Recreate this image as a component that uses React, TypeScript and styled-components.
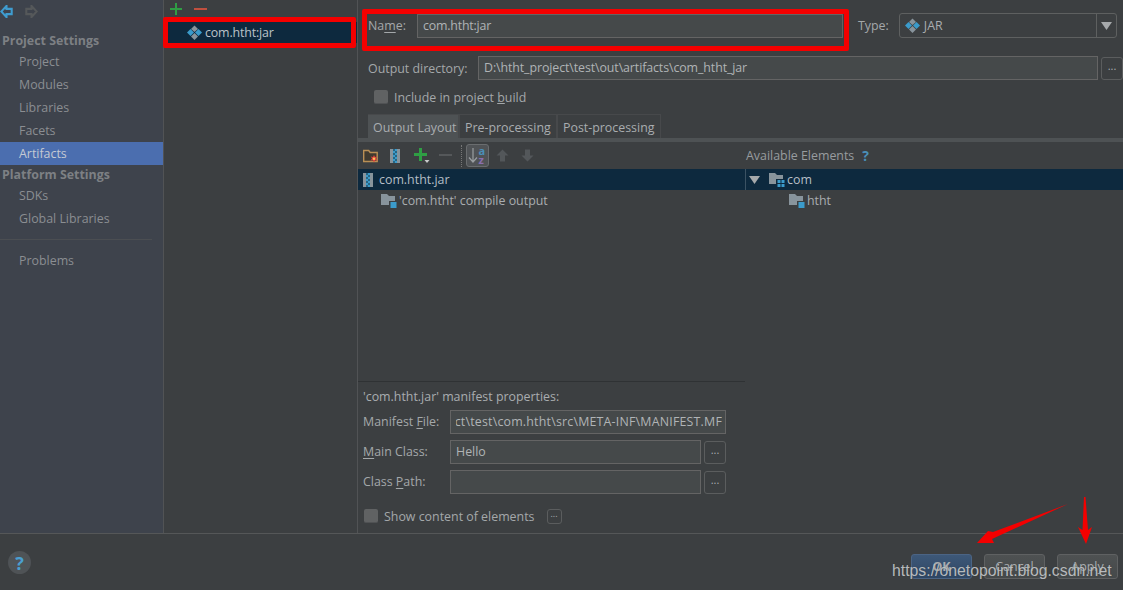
import React from "react";
import styled, { createGlobalStyle } from "styled-components";

const Global = createGlobalStyle`
  html, body { margin: 0; padding: 0; background: #3c3f41; }
  * { box-sizing: border-box; }
  body { font-family: "Open Sans", "Noto Sans", sans-serif; font-size: 12.4px; color: #bbbbbb; }
`;

const Page = styled.div`
  position: relative;
  width: 1123px;
  height: 590px;
  overflow: hidden;
  background: #3c3f41;
  display: flex;
  flex-direction: column;
`;
const Body = styled.div`
  height: 534px;
  flex: none;
  display: flex;
  border-bottom: 1px solid #555758;
`;
const Sidebar = styled.nav`
  width: 164px;
  flex: none;
  background: #3e434c;
  border-right: 1px solid #515355;
  display: flex;
  flex-direction: column;
`;
const NavArrows = styled.div`
  height: 31px;
  flex: none;
  padding-top: 5px;
  display: flex;
  gap: 12px;
  align-items: flex-start;
`;
const SectionTitle = styled.div`
  height: 19px;
  flex: none;
  line-height: 20px;
  padding-left: 2px;
  font-weight: 700;
  color: #7d8084;
`;
const NavItem = styled.div<{ $active?: boolean }>`
  height: 23px;
  flex: none;
  line-height: 23px;
  padding-left: 19px;
  color: ${(p) => (p.$active ? "#c5cad3" : "#8b8e92")};
  background: ${(p) => (p.$active ? "#4b6eaf" : "transparent")};
`;
const NavRule = styled.hr`
  margin: 9px 11px 9px 0;
  border: 0;
  border-top: 1px solid #4b4e52;
`;
const ListPane = styled.section`
  width: 194px;
  flex: none;
  border-right: 1px solid #515355;
  display: flex;
  flex-direction: column;
`;
const ListTools = styled.div`
  height: 22px;
  flex: none;
  padding: 3px 0 0 6px;
  display: flex;
  gap: 12px;
  align-items: flex-start;
`;
const SelectedRow = styled.div<{ $indent?: number }>`
  height: 21px;
  display: flex;
  align-items: center;
  gap: 3px;
  padding-left: ${(p) => p.$indent ?? 0}px;
  background: #0d293e;
  color: #bcc3c9;
  letter-spacing: -0.15px;
`;
const Detail = styled.section`
  flex: 1;
  min-width: 0;
  display: flex;
  flex-direction: column;
`;
const NameRow = styled.div`
  height: 25px;
  flex: none;
  margin-top: 13px;
  display: flex;
  align-items: center;
`;
const Label = styled.label<{ $width?: number; $inset?: number; $gap?: number }>`
  flex: none;
  width: ${(p) => (p.$width ? `${p.$width}px` : "auto")};
  padding-left: ${(p) => p.$inset ?? 0}px;
  margin-left: ${(p) => p.$gap ?? 0}px;
  color: #a4a8aa;
  u { text-underline-offset: 2px; }
`;
const Field = styled.div<{ $width?: number; $tracking?: number }>`
  height: 24px;
  line-height: 22px;
  width: ${(p) => p.$width}px;
  flex: none;
  padding: 0 5px;
  background: #45494a;
  border: 1px solid #646464;
  color: #b0b4b6;
  white-space: nowrap;
  overflow: hidden;
  letter-spacing: ${(p) => p.$tracking ?? 0}px;
`;
const ClippedEnd = styled.div`
  display: flex;
  justify-content: flex-end;
  overflow: hidden;
  margin-right: -2px;
  letter-spacing: 0.2px;
`;
const Combo = styled.div`
  margin-left: 10px;
  width: 218px;
  height: 25px;
  border: 1px solid #5e6060;
  border-radius: 3px;
  display: flex;
  align-items: center;
  flex: none;
  color: #a9adb0;
`;
const ComboValue = styled.div`
  flex: 1;
  display: flex;
  align-items: center;
  gap: 4px;
  padding-left: 5px;
`;
const ComboArrow = styled.div`
  width: 20px;
  height: 100%;
  border-left: 1px solid #5e6060;
  display: flex;
  align-items: center;
  justify-content: center;
`;
const OutputRow = styled.div`
  height: 24px;
  flex: none;
  margin-top: 18px;
  display: flex;
  align-items: center;
  gap: 3px;
`;
const Ellipsis = styled.div<{ $small?: boolean }>`
  flex: none;
  width: ${(p) => (p.$small ? 15 : 22)}px;
  height: ${(p) => (p.$small ? 15 : 23)}px;
  margin-left: ${(p) => (p.$small ? 6 : 0)}px;
  border: 1px solid #5b5d5e;
  border-radius: 3px;
  display: flex;
  align-items: center;
  justify-content: center;
  padding-bottom: 5px;
  font-size: ${(p) => (p.$small ? 9 : 11)}px;
  color: #a9adb0;
`;
const CheckRow = styled.div<{ $left: number; $top: number }>`
  display: flex;
  flex: none;
  align-items: center;
  gap: 6px;
  height: 18px;
  margin: ${(p) => p.$top}px 0 0 ${(p) => p.$left}px;
  color: #a4a8aa;
`;
const Check = styled.span`
  width: 14px;
  height: 14px;
  flex: none;
  border-radius: 2px;
  background: #606263;
  border-bottom: 1px solid #505254;
`;
const Tabs = styled.div`
  height: 24px;
  flex: none;
  margin: 8px 0 0 10px;
  display: flex;
`;
const Tab = styled.div<{ $active?: boolean; $width: number }>`
  width: ${(p) => p.$width}px;
  border: 1px solid #47494b;
  border-bottom: 0;
  border-left-width: ${(p) => (p.$active ? 0 : 1)}px;
  line-height: 26px;
  padding-left: 5px;
  white-space: nowrap;
  background: ${(p) => (p.$active ? "#4e5254" : "transparent")};
  color: #a9adb0;
`;
const ThickRule = styled.div`
  height: 4px;
  flex: none;
  background: #4e5254;
`;
const Split = styled.div`
  flex: 1;
  display: flex;
  min-height: 0;
`;
const LayoutCol = styled.div`
  width: 387px;
  flex: none;
  display: flex;
  flex-direction: column;
`;
const Toolbar = styled.div`
  height: 27px;
  flex: none;
  padding-left: 5px;
  display: flex;
  align-items: center;
`;
const ToolSlot = styled.span<{ $width: number }>`
  width: ${(p) => p.$width}px;
  flex: none;
  display: flex;
  align-items: center;
`;
const ToolDots = styled.span`
  width: 0;
  height: 22px;
  border-left: 1px dotted #777;
  margin-right: 4px;
`;
const SortButton = styled.span`
  width: 23px;
  height: 23px;
  flex: none;
  margin-right: 7px;
  border: 1px solid #6a6d6f;
  border-radius: 3px;
  background: #505356;
  display: flex;
  align-items: center;
  justify-content: center;
`;
const TreeRow = styled.div<{ $indent: number; $selected?: boolean; $gap?: number }>`
  height: 21px;
  flex: none;
  display: flex;
  align-items: center;
  gap: ${(p) => p.$gap ?? 2}px;
  padding-left: ${(p) => p.$indent}px;
  background: ${(p) => (p.$selected ? "#0d293e" : "transparent")};
  color: ${(p) => (p.$selected ? "#b6bfc6" : "#a9adb0")};
`;
const Spacer = styled.div`
  flex: 1;
`;
const Manifest = styled.div`
  height: 152px;
  flex: none;
  border-top: 1px solid #2f3234;
  padding: 6px 0 0 5px;
  display: flex;
  flex-direction: column;
`;
const ManifestTitle = styled.div`
  height: 17px;
  line-height: 17px;
  color: #a9adb0;
  margin-bottom: 5px;
`;
const ManifestRow = styled.div`
  height: 24px;
  flex: none;
  margin-bottom: 6px;
  display: flex;
  align-items: center;
  gap: 3px;
  label { padding-bottom: 2px; }
`;
const AvailableCol = styled.div`
  flex: 1;
  display: flex;
  flex-direction: column;
`;
const AvailableHead = styled.div`
  height: 27px;
  flex: none;
  display: flex;
  align-items: center;
  gap: 8px;
  padding-left: 1px;
  color: #989c9f;
`;
const QuestionMark = styled.span`
  font-weight: 700;
  font-size: 14px;
  color: #4a8fb8;
`;
const ExpandCell = styled.span`
  width: 22px;
  height: 100%;
  flex: none;
  border-left: 1px solid #3b5263;
  display: flex;
  align-items: center;
  padding-left: 3px;
`;
const Footer = styled.footer`
  flex: 1;
  display: flex;
  align-items: flex-start;
  padding: 20px 5px 0 8px;
`;
const Help = styled.div`
  width: 23px;
  height: 23px;
  margin-top: -3px;
  border-radius: 50%;
  background: #4f5356;
  display: flex;
  align-items: center;
  justify-content: center;
  font-size: 18px;
  font-weight: 700;
  color: #4a9fd0;
`;
const FooterButtons = styled.div`
  margin-left: auto;
  display: flex;
  gap: 12px;
`;
const DialogButton = styled.button<{ $primary?: boolean }>`
  width: 61px;
  height: 25px;
  padding: 0;
  border: 1px solid ${(p) => (p.$primary ? "#4b6484" : "#5f6162")};
  border-radius: 3px;
  font: inherit;
  font-weight: ${(p) => (p.$primary ? 700 : 400)};
  color: #a9adb0;
  background: ${(p) => (p.$primary ? "linear-gradient(#3d5878, #2f4765)" : "linear-gradient(#4e5152, #45494a)")};
`;
const RedBox = styled.div<{ $x: number; $y: number; $w: number; $h: number }>`
  position: absolute;
  left: ${(p) => p.$x}px;
  top: ${(p) => p.$y}px;
  width: ${(p) => p.$w}px;
  height: ${(p) => p.$h}px;
  border: 5px solid #f40000;
  border-radius: 2px;
`;
const ArrowLayer = styled.svg`
  position: absolute;
  left: 0;
  top: 0;
  width: 1123px;
  height: 590px;
  pointer-events: none;
`;
const Watermark = styled.div`
  position: absolute;
  left: 892px;
  top: 560px;
  font-family: "Liberation Sans", Arial, sans-serif;
  font-size: 15.8px;
  line-height: 22px;
  white-space: nowrap;
  color: rgba(205, 208, 210, 0.85);
  text-shadow: 0 0 1px rgba(60, 63, 65, 0.6);
`;

const Diamonds = () => (
  <svg width="15" height="15" viewBox="0 0 15 15">
    <path d="M7.5 0.5 11 4 7.5 7 4 4Z" fill="#88949c" />
    <path d="M3.5 4 7 7.5 3.5 11 0 7.5Z" fill="#3b9bcb" />
    <path d="M11.5 4 15 7.5 11.5 11 8 7.5Z" fill="#3b9bcb" />
    <path d="M7.5 8 11 11.5 7.5 15 4 11.5Z" fill="#88949c" />
  </svg>
);
const SmallPlus = () => (
  <svg width="12" height="12" viewBox="0 0 12 12">
    <path d="M5 0h2v5h5v2H7v5H5V7H0V5h5z" fill="#2f9e44" />
  </svg>
);
const DropPlus = () => (
  <svg width="16" height="16" viewBox="0 0 16 16">
    <path d="M5 0h3v5h5v3H8v5H5V8H0V5h5z" fill="#2f9e44" />
    <path d="M10.5 12h5L13 15z" fill="#c8cacb" />
  </svg>
);
const Minus = ({ c }: { c: string }) => (
  <svg width="13" height="13" viewBox="0 0 13 13">
    <rect x="0" y="5" width="13" height="2" fill={c} />
  </svg>
);
const NavArrow = ({ left, c }: { left?: boolean; c: string }) => (
  <svg width="13" height="13" viewBox="0 0 13 15" style={left ? undefined : { transform: "scaleX(-1)" }}>
    <path d="M6.5 1 0.5 7.5 6.5 14V10.5H12.5V4.5H6.5Z" fill="none" stroke={c} strokeWidth="2.4" />
  </svg>
);
const Zip = () => (
  <svg width="10" height="14" viewBox="0 0 10 14">
    <rect x="0" y="0" width="10" height="14" fill="#88949c" />
    <rect x="3" y="0" width="4" height="14" fill="#3b9bcb" />
    <path d="M3 1h2M5 3h2M3 5h2M5 7h2M3 9h2M5 11h2M3 13h2" stroke="#14303f" strokeWidth="1" />
  </svg>
);
const Folder = ({ badge }: { badge: "square" | "grid" }) => (
  <svg width="16" height="15" viewBox="0 0 16 15">
    <path d="M0 1h6l2 2h6v9H0z" fill="#88949c" />
    {badge === "square" ? (
      <>
        <rect x="8" y="8" width="8" height="7" fill="#3c3f41" />
        <rect x="9.5" y="9" width="6" height="6" fill="#3b9bcb" />
      </>
    ) : (
      <>
        <rect x="7" y="7" width="9" height="8" fill="#0d293e" />
        <path d="M8.5 8h3v3h-3zM12.5 8h3v3h-3zM8.5 12h3v3h-3zM12.5 12h3v3h-3z" fill="#3b9bcb" />
      </>
    )}
  </svg>
);
const Tri = ({ c = "#a6a9ab" }: { c?: string }) => (
  <svg width="11" height="8" viewBox="0 0 11 8">
    <path d="M0 0h11L5.5 8z" fill={c} />
  </svg>
);
const NewFolder = () => (
  <svg width="16" height="16" viewBox="0 0 16 16">
    <path d="M0.7 2.5h5l1.5 2h7v9H0.7z" fill="#3f3a30" stroke="#b98f55" strokeWidth="1.4" />
    <path d="M11 7l1 2 2.200-.6L13 10.500l1.500 2-2.400-.2L11 14.500l-1.100-2.200-2.400.2 1.500-2L7.800 8.400 10 9z" fill="#e0433a" />
    <circle cx="11" cy="10.700" r="1.200" fill="#f6c65b" />
  </svg>
);
const UpDown = ({ up }: { up?: boolean }) => (
  <svg width="13" height="13" viewBox="0 0 13 13" style={up ? undefined : { transform: "scaleY(-1)" }}>
    <path d="M6.500 0.500 12.500 6.500H9V12.500H4V6.500H0.500z" fill="#53575a" />
  </svg>
);
const SortIcon = () => (
  <svg width="21" height="21" viewBox="0 0 21 21">
    <path d="M6 3v14M2 12.500l4 4.500 4-4.500" fill="none" stroke="#9a9ea1" strokeWidth="1.200" />
    <text x="11.500" y="10" fontSize="11" fontWeight="700" fontFamily="Open Sans, sans-serif" fill="#4a8fb8">a</text>
    <text x="11.500" y="19" fontSize="11" fontWeight="700" fontFamily="Open Sans, sans-serif" fill="#8a6fb0">z</text>
  </svg>
);

export default function App() {
  return (
    <Page>
      <Global />
      <Body>
        <Sidebar>
          <NavArrows>
            <NavArrow left c="#3f9ccf" />
            <NavArrow c="#55585a" />
          </NavArrows>
          <SectionTitle>Project Settings</SectionTitle>
          <NavItem>Project</NavItem>
          <NavItem>Modules</NavItem>
          <NavItem>Libraries</NavItem>
          <NavItem>Facets</NavItem>
          <NavItem $active>Artifacts</NavItem>
          <SectionTitle>Platform Settings</SectionTitle>
          <NavItem>SDKs</NavItem>
          <NavItem>Global Libraries</NavItem>
          <NavRule />
          <NavItem>Problems</NavItem>
        </Sidebar>
        <ListPane>
          <ListTools>
            <SmallPlus />
            <Minus c="#c0503f" />
          </ListTools>
          <SelectedRow $indent={23}>
            <Diamonds />
            com.htht:jar
          </SelectedRow>
        </ListPane>
        <Detail>
          <NameRow>
            <Label $width={59} $inset={10}>
              Na<u>m</u>e:
            </Label>
            <Field $width={426} $tracking={-0.2}>com.htht:jar</Field>
            <Label $gap={15}>Type:</Label>
            <Combo>
              <ComboValue>
                <Diamonds />
                JAR
              </ComboValue>
              <ComboArrow>
                <Tri />
              </ComboArrow>
            </Combo>
          </NameRow>
          <OutputRow>
            <Label $width={117} $inset={10}>
              Output directory:
            </Label>
            <Field $width={620} $tracking={-0.1}>D:\htht_project\test\out\artifacts\com_htht_jar</Field>
            <Ellipsis>...</Ellipsis>
          </OutputRow>
          <CheckRow $left={16} $top={8}>
            <Check />
            <span>
              Include in project <u>b</u>uild
            </span>
          </CheckRow>
          <Tabs>
            <Tab $active $width={91}>Output Layout</Tab>
            <Tab $width={98}>Pre-processing</Tab>
            <Tab $width={104}>Post-processing</Tab>
          </Tabs>
          <ThickRule />
          <Split>
            <LayoutCol>
              <Toolbar>
                <ToolSlot $width={27}><NewFolder /></ToolSlot>
                <ToolSlot $width={24}><Zip /></ToolSlot>
                <ToolSlot $width={25}><DropPlus /></ToolSlot>
                <ToolSlot $width={22}><Minus c="#55585a" /></ToolSlot>
                <ToolDots />
                <SortButton><SortIcon /></SortButton>
                <ToolSlot $width={25}><UpDown up /></ToolSlot>
                <ToolSlot $width={20}><UpDown /></ToolSlot>
              </Toolbar>
              <TreeRow $indent={5} $selected $gap={6}>
                <Zip />
                com.htht.jar
              </TreeRow>
              <TreeRow $indent={23}>
                <Folder badge="square" />
                'com.htht' compile output
              </TreeRow>
              <Spacer />
              <Manifest>
                <ManifestTitle>'com.htht.jar' manifest properties:</ManifestTitle>
                <ManifestRow>
                  <Label $width={84}>Manifest <u>F</u>ile:</Label>
                  <Field $width={276}>
                    <ClippedEnd>
                      <span>ject\test\com.htht\src\META-INF\MANIFEST.MF</span>
                    </ClippedEnd>
                  </Field>
                </ManifestRow>
                <ManifestRow>
                  <Label $width={84}><u>M</u>ain Class:</Label>
                  <Field $width={251}>Hello</Field>
                  <Ellipsis>...</Ellipsis>
                </ManifestRow>
                <ManifestRow>
                  <Label $width={84}>Class <u>P</u>ath:</Label>
                  <Field $width={251} />
                  <Ellipsis>...</Ellipsis>
                </ManifestRow>
                <CheckRow $left={1} $top={7}>
                  <Check />
                  <span>Show content of elements</span>
                  <Ellipsis $small>...</Ellipsis>
                </CheckRow>
              </Manifest>
            </LayoutCol>
            <AvailableCol>
              <AvailableHead>
                Available Elements
                <QuestionMark>?</QuestionMark>
              </AvailableHead>
              <TreeRow $indent={0} $selected>
                <ExpandCell><Tri /></ExpandCell>
                <Folder badge="grid" />
                com
              </TreeRow>
              <TreeRow $indent={44}>
                <Folder badge="square" />
                htht
              </TreeRow>
            </AvailableCol>
          </Split>
        </Detail>
      </Body>
      <Footer>
        <Help>?</Help>
        <FooterButtons>
          <DialogButton $primary>OK</DialogButton>
          <DialogButton>Cancel</DialogButton>
          <DialogButton>Apply</DialogButton>
        </FooterButtons>
      </Footer>
      <RedBox $x={163} $y={17} $w={193} $h={31} />
      <RedBox $x={362} $y={9} $w={487} $h={42} />
      <ArrowLayer viewBox="0 0 1123 590">
        <path d="M1068 504 L993 532 L988 531 L977 543 L994 543 L992 539 Z" fill="#f40000" />
        <path d="M1084 497 L1082.500 530 L1078 527 L1086 544 L1092 527 L1088 530 L1085.500 497 Z" fill="#f40000" />
      </ArrowLayer>
      <Watermark>https://onetopoint.blog.csdn.net</Watermark>
    </Page>
  );
}
